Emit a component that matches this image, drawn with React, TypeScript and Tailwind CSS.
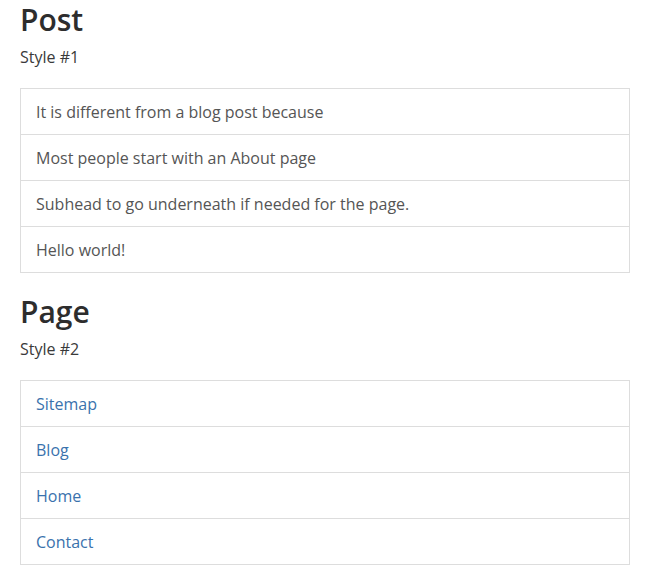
import React from "react";

const posts = [
  "It is different from a blog post because",
  "Most people start with an About page",
  "Subhead to go underneath if needed for the page.",
  "Hello world!",
];

const pages = ["Sitemap", "Blog", "Home", "Contact"];

const Section = ({
  title,
  style,
  items,
  links,
  first,
}: {
  title: string;
  style: string;
  items: string[];
  links?: boolean;
  first?: boolean;
}) => (
  <div className={first ? "" : "mt-[19px]"}>
    <h1 className="text-[30px] font-semibold leading-[40px] text-[#2d2d2d]">{title}</h1>
    <p className="mt-[5px] text-[16px] leading-6 text-[#3a3a3a]">{style}</p>
    <ul className="mt-[19px] border border-[#ddd]">
      {items.map((item, i) => (
        <li
          key={item}
          className={`px-[15px] pt-[11px] pb-[9px] text-[16px] leading-[25px] ${
            i > 0 ? "border-t border-[#ddd]" : ""
          } ${links ? "text-[#3a72ad]" : "text-[#555]"}`}
        >
          {links ? <a href="#">{item}</a> : item}
        </li>
      ))}
    </ul>
  </div>
);

export default function App() {
  return (
    <div
      className="min-h-screen bg-white pl-5 pr-[15px]"
      style={{ fontFamily: '"Open Sans", sans-serif' }}
    >
      <Section title="Post" style="Style #1" items={posts} first />
      <Section title="Page" style="Style #2" items={pages} links />
    </div>
  );
}
